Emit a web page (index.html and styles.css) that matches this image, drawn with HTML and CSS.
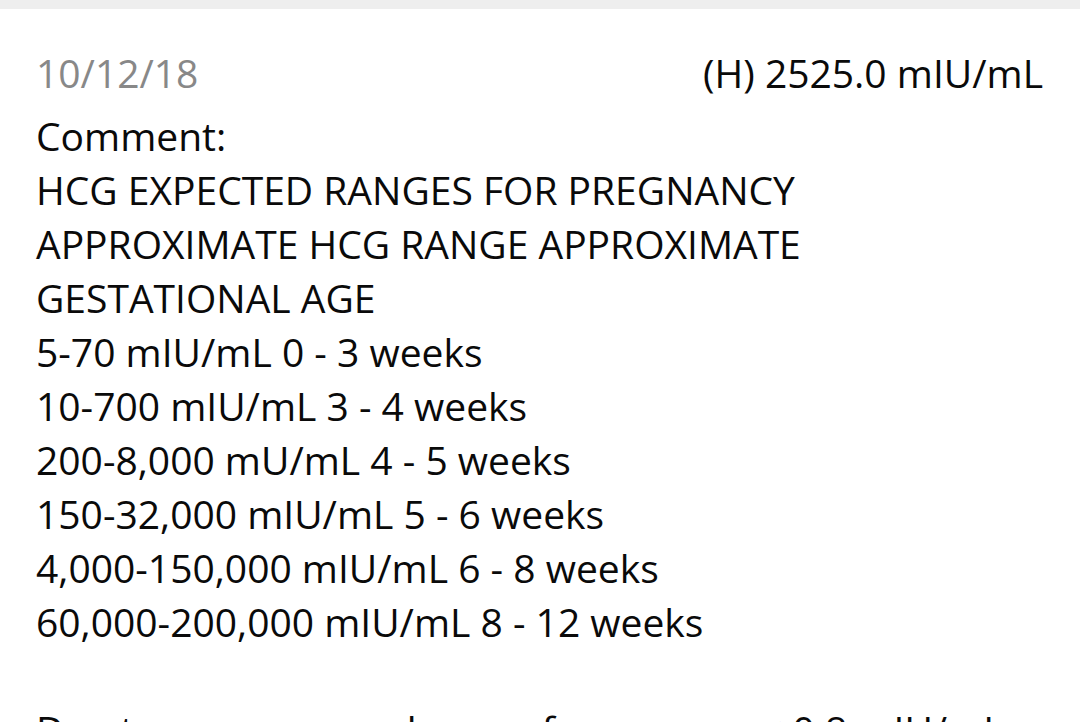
FILE: index.html
```html
<!DOCTYPE html>
<html>
<head>
<meta charset="utf-8">
<link rel="stylesheet" href="styles.css">
</head>
<body>
<div class="topbar"></div>
<main class="card">
  <div class="result-row">
    <span class="date">10/12/18</span>
    <span class="value">(H) 2525.0 mIU/mL</span>
  </div>
  <div class="comment">
    <p class="line">Comment:</p>
    <p class="line">HCG EXPECTED RANGES FOR PREGNANCY</p>
    <p class="line">APPROXIMATE HCG RANGE APPROXIMATE</p>
    <p class="line">GESTATIONAL AGE</p>
    <p class="line">5-70 mIU/mL 0 - 3 weeks</p>
    <p class="line">10-700 mIU/mL 3 - 4 weeks</p>
    <p class="line">200-8,000 mU/mL 4 - 5 weeks</p>
    <p class="line">150-32,000 mIU/mL 5 - 6 weeks</p>
    <p class="line">4,000-150,000 mIU/mL 6 - 8 weeks</p>
    <p class="line">60,000-200,000 mIU/mL 8 - 12 weeks</p>
    <p class="line blank">&nbsp;</p>
    <p class="line">Due to a new normal range for women, &lt; 0.8 mIU/mL</p>
  </div>
</main>
</body>
</html>
```

FILE: styles.css
```css
html, body {
  margin: 0;
  padding: 0;
  background: #ffffff;
  overflow: hidden;
}
body {
  font-family: "Open Sans", "Noto Sans", sans-serif;
  color: #0a0a0a;
  height: 722px;
}
.topbar {
  height: 9px;
  background: #eeeeee;
}
.card {
  padding: 0 37px 0 36px;
}
.result-row {
  display: flex;
  justify-content: space-between;
  align-items: baseline;
  margin-top: 37px;
  font-size: 39px;
  line-height: 54px;
}
.date {
  color: #888888;
}
.value {
  color: #0a0a0a;
}
.comment {
  margin-top: 9px;
  font-size: 39px;
  line-height: 54px;
}
.line {
  margin: 0;
  white-space: nowrap;
}
```
